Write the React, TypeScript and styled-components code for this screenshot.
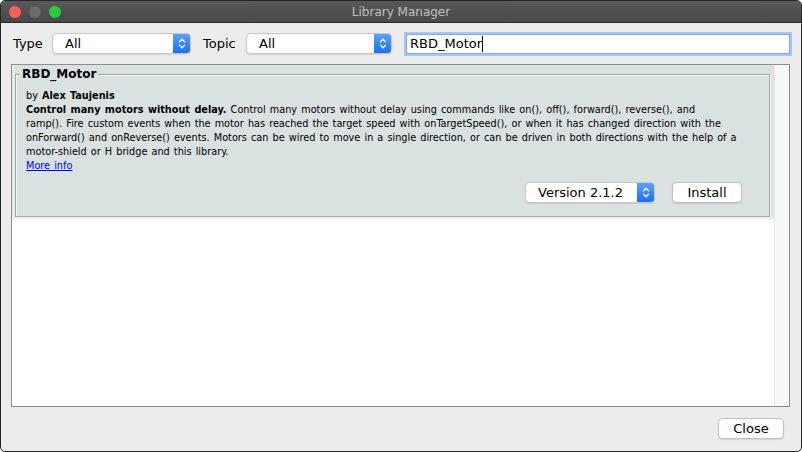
import React from 'react';
import styled, { createGlobalStyle } from 'styled-components';

const Global = createGlobalStyle`
  html, body { margin: 0; padding: 0; background: #ffffff; }
  body { width: 802px; height: 452px; overflow: hidden; }
  * { box-sizing: border-box; }
`;

const UI = `"DejaVu Sans", "Lucida Grande", sans-serif`;

const Window = styled.div`
  width: 802px;
  height: 452px;
  border: 1px solid #262626;
  border-radius: 5px;
  overflow: hidden;
  display: flex;
  flex-direction: column;
  background: #ececec;
  font-family: ${UI};
  color: #000;
`;

const TitleBar = styled.div`
  flex: none;
  height: 22px;
  display: grid;
  grid-template-columns: 1fr auto 1fr;
  align-items: center;
  background: linear-gradient(#595959, #494949);
  border-bottom: 1px solid #2a2a2a;
`;

const Lights = styled.div`
  display: flex;
  gap: 8px;
  padding-left: 8px;
`;

const Light = styled.span<{ $c: string }>`
  width: 12px;
  height: 12px;
  border-radius: 50%;
  background: ${(p) => p.$c};
`;

const Title = styled.div`
  font-size: 12px;
  color: #c0c0c0;
`;

const Body = styled.div`
  flex: 1;
  display: flex;
  flex-direction: column;
  padding: 9px 11px 12px 10px;
  min-height: 0;
`;

const FilterRow = styled.div`
  flex: none;
  height: 22px;
  display: flex;
  align-items: center;
`;

const Label = styled.div<{ $w: number; $ml?: number }>`
  width: ${(p) => p.$w}px;
  margin-left: ${(p) => p.$ml ?? 0}px;
  padding-left: 2px;
  font-size: 13px;
  flex: none;
`;

const SelectBox = styled.div<{ $w: number }>`
  width: ${(p) => p.$w}px;
  height: 21px;
  flex: none;
  display: flex;
  align-items: stretch;
  background: #fff;
  border: 1px solid #c8c8c8;
  border-radius: 4px;
  box-shadow: 0 1px 1px rgba(0, 0, 0, 0.1);
  font-size: 13px;
  overflow: hidden;
`;

const SelectText = styled.div<{ $pl: number }>`
  flex: 1;
  display: flex;
  align-items: center;
  padding-left: ${(p) => p.$pl}px;
  white-space: nowrap;
`;

const SelectArrow = styled.div`
  width: 17px;
  flex: none;
  display: flex;
  align-items: center;
  justify-content: center;
  background: linear-gradient(#5aa2ff, #1d6ef2);
`;

const Search = styled.div`
  flex: 1;
  margin-left: 14px;
  height: 20px;
  margin-top: 1px;
  background: #fff;
  border: 1px solid #7ea8e6;
  box-shadow: 0 0 0 2px #a8c6f2;
  display: flex;
  align-items: center;
  padding-left: 3px;
  font-size: 13px;
`;

const Caret = styled.span`
  display: inline-block;
  width: 1px;
  height: 16px;
  background: #000;
`;

const ListFrame = styled.div`
  flex: 1;
  margin-top: 10px;
  border: 1px solid #8d8d8d;
  display: flex;
  min-height: 0;
  background: #fff;
`;

const ListContent = styled.div`
  flex: 1;
  min-width: 0;
  background: #fff;
`;

const Scrollbar = styled.div`
  width: 15px;
  flex: none;
  background: #f8f8f8;
  border-left: 1px solid #e8e8e8;
`;

const Cell = styled.div`
  padding: 2px 4px 2px 3px;
  background: #d9e1e1;
  box-shadow: inset 3px -2px 0 #e6ecec;
`;

const Group = styled.fieldset`
  margin: 0;
  min-width: 0;
  padding: 8px 27px 13px 10px;
  border: 1px solid #a0a5a5;
  box-shadow: inset 1px 1px 0 #f4f7f7, 1px 1px 0 #f7f9f9;
`;

const Legend = styled.legend`
  margin-left: -6px;
  padding: 0 2px;
  font-size: 12px;
  line-height: 14px;
  font-weight: bold;
  background: #d9e1e1;
`;

const Desc = styled.div`
  font-size: 10.8px;
  font-stretch: condensed;
  word-spacing: 1px;
  line-height: 14px;
  white-space: nowrap;
  overflow: hidden;
`;

const MoreInfo = styled.a`
  color: #0000ff;
  text-decoration: underline;
`;

const Actions = styled.div`
  margin-top: 9px;
  display: flex;
  justify-content: flex-end;
  gap: 17px;
`;

const Button = styled.div<{ $w: number }>`
  width: ${(p) => p.$w}px;
  height: 21px;
  display: flex;
  align-items: center;
  justify-content: center;
  background: #fff;
  border: 1px solid #c0c0c0;
  border-radius: 4px;
  box-shadow: 0 1px 1px rgba(0, 0, 0, 0.1);
  font-size: 13px;
`;

const Footer = styled.div`
  flex: none;
  margin-top: 11px;
  display: flex;
  justify-content: flex-end;
  padding-right: 6px;
`;

const Chevrons = () => (
  <svg width="8" height="13" viewBox="0 0 8 13">
    <path d="M1.5 4.8 L4 2.3 L6.5 4.8 M1.5 8.2 L4 10.7 L6.5 8.2" fill="none" stroke="#fff" strokeWidth="1.3" strokeLinecap="round" strokeLinejoin="round" />
  </svg>
);

const Select = ({ w, pl, children }: { w: number; pl: number; children: React.ReactNode }) => (
  <SelectBox $w={w}>
    <SelectText $pl={pl}>{children}</SelectText>
    <SelectArrow>
      <Chevrons />
    </SelectArrow>
  </SelectBox>
);

export default function App() {
  return (
    <>
      <Global />
      <Window>
        <TitleBar>
          <Lights>
            <Light $c="#fc5f57" />
            <Light $c="#6a6a6a" />
            <Light $c="#2bc840" />
          </Lights>
          <Title>Library Manager</Title>
          <div />
        </TitleBar>
        <Body>
          <FilterRow>
            <Label $w={41}>Type</Label>
            <Select w={139} pl={12}>All</Select>
            <Label $w={45} $ml={10}>Topic</Label>
            <Select w={146} pl={12}>All</Select>
            <Search>
              RBD_Motor<Caret />
            </Search>
          </FilterRow>
          <ListFrame>
            <ListContent>
              <Cell>
                <Group>
                  <Legend>RBD_Motor</Legend>
                  <Desc>
                    by <b>Alex Taujenis</b>
                    <br />
                    <b>Control many motors without delay.</b> Control many motors without delay using commands like on(), off(), forward(), reverse(), and
                    <br />
                    ramp(). Fire custom events when the motor has reached the target speed with onTargetSpeed(), or when it has changed direction with the
                    <br />
                    onForward() and onReverse() events. Motors can be wired to move in a single direction, or can be driven in both directions with the help of a
                    <br />
                    motor-shield or H bridge and this library.
                    <br />
                    <MoreInfo href="#">More info</MoreInfo>
                  </Desc>
                  <Actions>
                    <Select w={130} pl={12}>Version 2.1.2</Select>
                    <Button $w={70}>Install</Button>
                  </Actions>
                </Group>
              </Cell>
            </ListContent>
            <Scrollbar />
          </ListFrame>
          <Footer>
            <Button $w={66}>Close</Button>
          </Footer>
        </Body>
      </Window>
    </>
  );
}
